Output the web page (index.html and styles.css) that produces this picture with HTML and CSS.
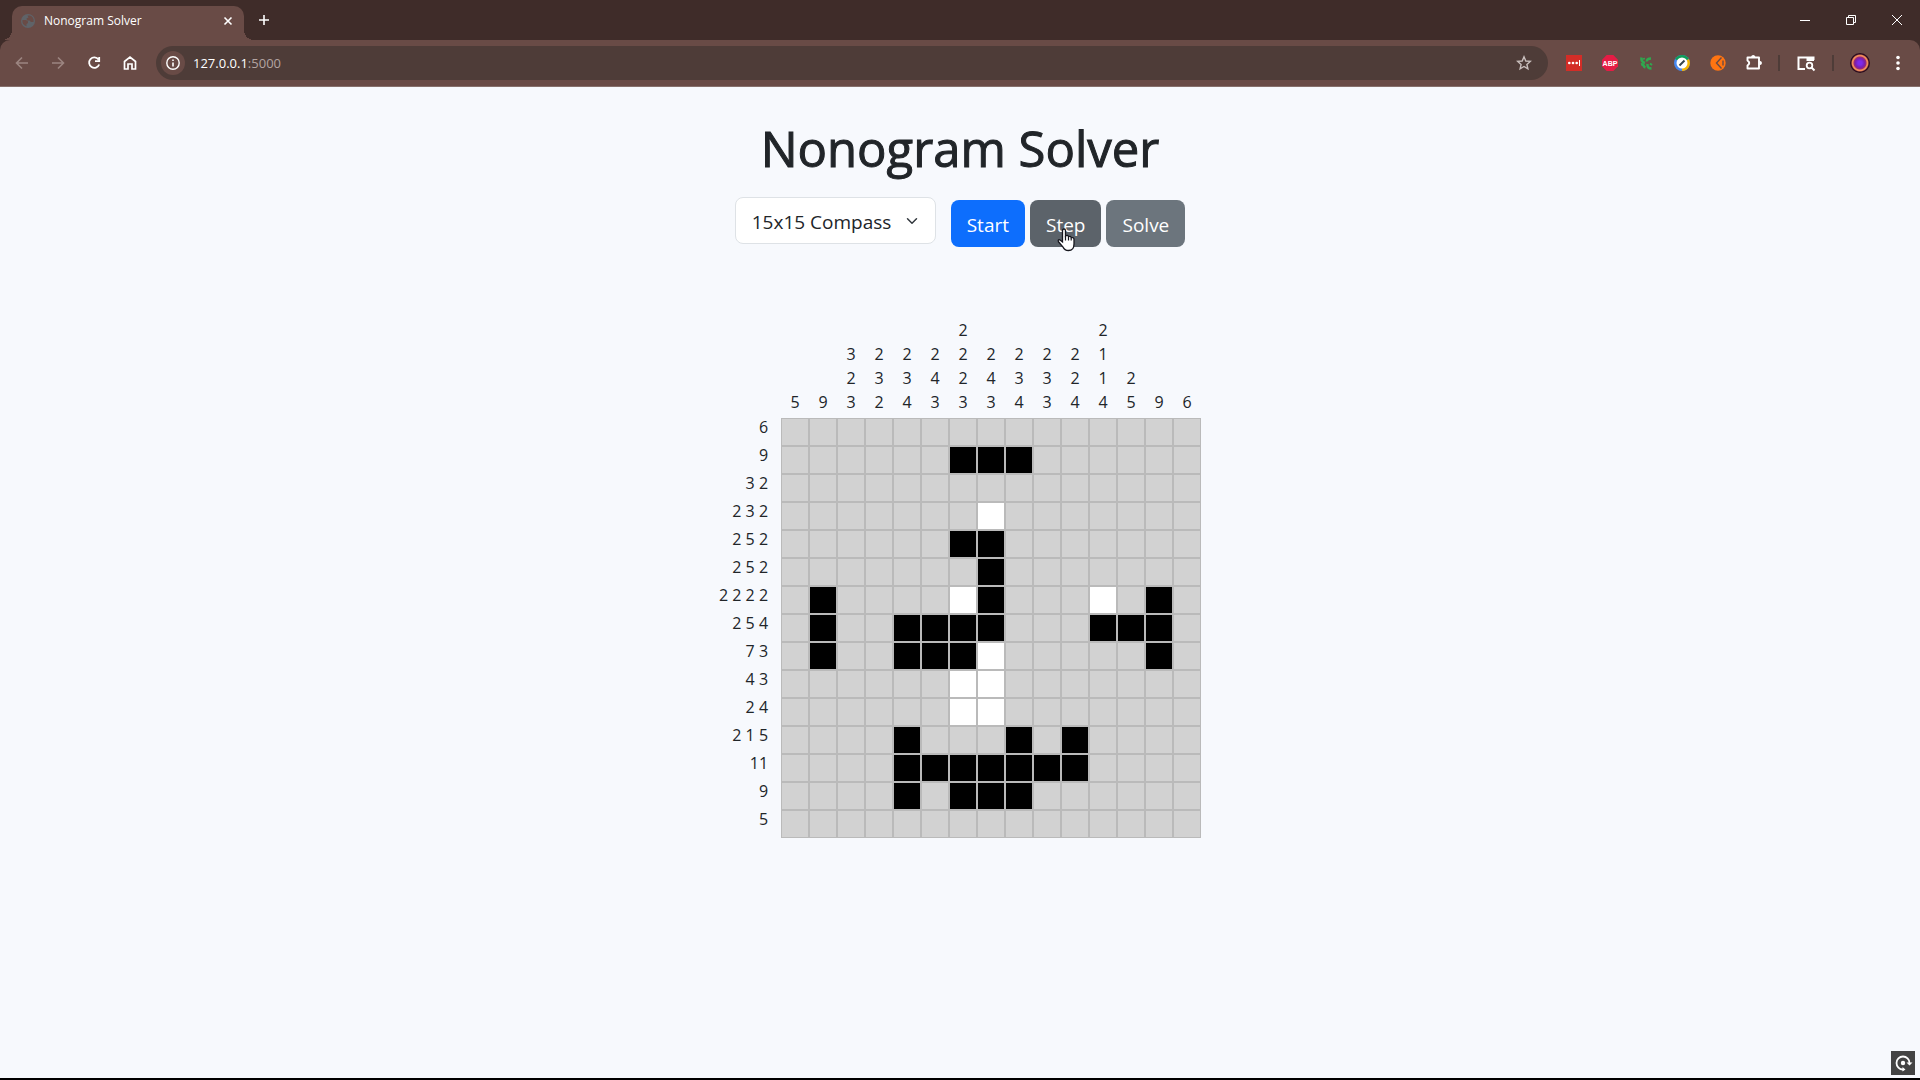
FILE: index.html
```html
<!DOCTYPE html>
<html lang="en">
<head>
<meta charset="utf-8">
<title>Nonogram Solver</title>
<link rel="stylesheet" href="styles.css">
</head>
<body>
<header class="browser">
  <div class="tab-strip">
    <div class="tab">
      <svg class="favicon" viewBox="0 0 16 16" aria-hidden="true"><circle cx="8" cy="8" r="7" fill="#5f6368"/><path d="M2.500 7H6L8 8.500V10L6.500 11V13.200A5.500 5.500 0 0 1 2.500 7zM7.500 2.500H10A5.800 5.800 0 0 1 13.500 9H11L9.500 7.500H7L6.500 5.500 8.500 4.500z" fill="#694b46"/></svg>
      <span class="tab-title">Nonogram Solver</span>
      <button class="icon-button tab-close" aria-label="Close tab"><svg viewBox="0 0 16 16"><path d="M4.500 4.500 11.500 11.500M11.500 4.500 4.500 11.500" stroke-width="1.600"/></svg></button>
    </div>
    <button class="icon-button new-tab" aria-label="New tab"><svg viewBox="0 0 16 16"><path d="M8 3V13M3 8H13" stroke-width="1.600"/></svg></button>
    <div class="window-controls">
      <button class="icon-button" aria-label="Minimize"><svg viewBox="0 0 16 16"><path d="M3 8.500H13"/></svg></button>
      <button class="icon-button" aria-label="Restore"><svg viewBox="0 0 16 16"><path d="M3.500 5.500H10.500V12.500H3.500zM5.500 5.500V3.500H12.500V10.500H10.500"/></svg></button>
      <button class="icon-button" aria-label="Close window"><svg viewBox="0 0 16 16"><path d="M3 3 13 13M13 3 3 13"/></svg></button>
    </div>
  </div>
  <div class="toolbar">
    <nav class="nav-buttons">
      <button class="icon-button" aria-label="Back" disabled><svg viewBox="0 0 16 16"><path d="M14 8H3M8 2.500 2.500 8 8 13.500" stroke-width="1.600"/></svg></button>
      <button class="icon-button" aria-label="Forward" disabled><svg viewBox="0 0 16 16"><path d="M2 8H13M8 2.500 13.500 8 8 13.500" stroke-width="1.600"/></svg></button>
      <button class="icon-button" aria-label="Reload"><svg viewBox="0 0 16 16"><path d="M12.500 4.500A5.200 5.200 0 1 0 13.200 9.500M13.200 2V6.200H9" stroke-width="1.800"/></svg></button>
      <button class="icon-button" aria-label="Home"><svg viewBox="0 0 16 16"><path d="M2.500 14V6.500L8 2 13.500 6.500V14H10V9H6V14z" stroke-width="1.700"/></svg></button>
    </nav>
    <div class="address-bar">
      <button class="icon-button site-info" aria-label="View site information"><svg viewBox="0 0 16 16"><circle cx="8" cy="8" r="6.200" stroke-width="1.400"/><path d="M8 7.500V11.500M8 4.500V6" stroke-width="1.600"/></svg></button>
      <span class="address"><span class="host">127.0.0.1</span>:5000</span>
      <button class="icon-button bookmark" aria-label="Bookmark this tab"><svg viewBox="0 0 16 16"><path d="M8 1.800 9.800 6 14.300 6.400 10.900 9.400 11.900 13.800 8 11.500 4.100 13.800 5.100 9.400 1.700 6.400 6.200 6z" stroke-width="1.400"/></svg></button>
    </div>
    <div class="extensions">
      <button class="icon-button" aria-label="Password manager"><svg viewBox="0 0 16 16"><path d="M0 0H16V16H0z" fill="#d32d27" stroke="none"/><path d="M13.500 5V11" stroke-width="1"/><g fill="#fff" stroke="none"><circle cx="3.300" cy="8" r="1.300"/><circle cx="7" cy="8" r="1.300"/><circle cx="10.700" cy="8" r="1.300"/></g></svg></button>
      <button class="icon-button" aria-label="Ad blocker"><svg viewBox="0 0 16 16"><path d="M4.700 0H11.300L16 4.700V11.300L11.300 16H4.700L0 11.300V4.700z" fill="#e51c45" stroke="none"/><text x="8" y="10.500" class="badge-text">ABP</text></svg></button>
      <button class="icon-button" aria-label="Phone extension"><svg viewBox="0 0 16 16"><g stroke="#2fa84f" stroke-width="2.600"><path d="M3.500 2.500Q3 7 7 8"/><path d="M9 6.500Q8.500 3.500 13 3.500"/><path d="M3 9.500Q5 9 5.500 10.500T7.500 12.500"/><path d="M9.500 9Q9 13.500 13.500 13.500"/><path d="M12 8.500 14 10" stroke-width="2"/><path d="M5 4 7 3.500" stroke-width="1.500"/></g></svg></button>
      <button class="icon-button" aria-label="Web tools"><svg viewBox="0 0 16 16"><circle cx="8" cy="8" r="8" fill="#4688f1" stroke="none"/><path d="M1.100 4A8 8 0 0 1 14.900 4L8 8z" fill="#109d58" stroke="none"/><path d="M14.900 4A8 8 0 0 1 8 16V8z" fill="#f4b400" stroke="none"/><circle cx="8" cy="8" r="5.500" fill="#fff" stroke="none"/><path d="M5.500 10.500 10.500 5.500" stroke="#34434b" stroke-width="2"/></svg></button>
      <button class="icon-button" aria-label="Orange extension"><svg viewBox="0 0 16 16"><circle cx="8" cy="8" r="7.700" fill="#ff7411" stroke="none"/><path d="M11.500 2.500 6.500 8 11.500 13.500M13 5.500V10.500" stroke="#694b46" stroke-width="1.400"/></svg></button>
      <button class="icon-button" aria-label="Extensions"><svg viewBox="0 0 16 16"><path d="M1.500 2.500H13V13.500H1.500V10.500Q5 8 1.500 5.500z" stroke-width="1.900" stroke-linejoin="round"/><path d="M5 2Q5.500 0 7.200 0T9.500 2zM13.500 5.700Q16 6.300 16 8T13.500 10.300z" fill="#fff" stroke="none"/></svg></button>
      <span class="divider"></span>
      <button class="icon-button side-search" aria-label="Search side panel"><svg viewBox="0 0 20 16"><path d="M9 14H2.500V2.500H17.500V5" stroke-width="2"/><path d="M10.500 2H18V6H10.500z" fill="#fff" stroke="none"/><circle cx="13.500" cy="10.500" r="2.800" stroke-width="1.800"/><path d="M15.500 12.500 18.500 15.500" stroke-width="2"/></svg></button>
      <span class="divider"></span>
      <button class="icon-button profile" aria-label="Profile"></button>
      <button class="icon-button" aria-label="Browser menu"><svg viewBox="0 0 16 16"><g fill="#fff" stroke="none"><circle cx="8" cy="2.500" r="1.800"/><circle cx="8" cy="8" r="1.800"/><circle cx="8" cy="13.500" r="1.800"/></g></svg></button>
    </div>
  </div>
</header>
<main class="page">
  <h1 class="title">Nonogram Solver</h1>
  <form class="controls" id="controls">
    <select class="puzzle-select" aria-label="Puzzle"><option>15x15 Compass</option></select>
    <div class="buttons">
      <button type="button" class="btn btn-primary">Start</button>
      <button type="button" class="btn btn-active">Step<svg class="cursor" viewBox="0 0 18 24" aria-hidden="true"><path d="M5.500 14V2.800Q5.500 1 7 1T8.500 2.800V8Q10.800 6.500 11.500 8.800 13.500 7.500 14.200 9.700 17 9 17 11.500V16Q17 22.500 11.500 22.500 7.500 22.500 6 19L1.500 13.800Q.500 11.500 2.800 11.800z" fill="#fff" stroke="#16161d" stroke-width="1.300"/><path d="M8.500 8V12.500M11.500 9V12.500M14.200 10V12.500" fill="none" stroke="#16161d" stroke-width="1.200"/></svg></button>
      <button type="button" class="btn btn-secondary">Solve</button>
    </div>
  </form>
  <table class="nonogram" id="nonogram"></table>
  <button class="capture" aria-label="Capture"><svg viewBox="0 0 24 24"><path d="M12 18.500A6.500 6.500 0 1 1 18.500 12" fill="none" stroke="#fff" stroke-width="1.800"/><circle cx="12" cy="12" r="2.200"/><path d="M15.500 11.500H21.500L18.500 14.500zM11.500 16 14.500 18.500 11.500 20.500z"/></svg></button>
</main>
<script src="script.js"></script>
</body>
</html>
```
FILE: styles.css
```css
* { box-sizing: border-box; }

body {
  margin: 0;
  min-height: 100vh;
  display: flex;
  flex-direction: column;
  background: #f7f9fd;
  color: #212529;
  font-family: "Segoe UI", "Open Sans", "Noto Sans", sans-serif;
  font-size: 16px;
  border-bottom: 2px solid #000;
}

button, select { font-family: inherit; }

/* Browser frame */
.browser {
  background: #3f2c29;
  color: #fff;
  border-bottom: 1px solid #86706c;
}

.icon-button {
  display: flex;
  flex: none;
  align-items: center;
  justify-content: center;
  width: 16px;
  height: 16px;
  padding: 0;
  border: 0;
  background: none;
  color: #fff;
}

.icon-button svg {
  display: block;
  width: 100%;
  height: 100%;
  overflow: visible;
  fill: none;
  stroke: currentColor;
}

.icon-button:disabled { color: #9c8581; }

.tab-strip {
  display: flex;
  align-items: center;
  height: 40px;
  padding: 0 15px 0 12px;
}

.tab {
  position: relative;
  align-self: flex-end;
  display: flex;
  align-items: center;
  gap: 8px;
  width: 232px;
  height: 34px;
  padding: 0 8px 4px;
  border-radius: 10px 10px 0 0;
  background: #694b46;
  font-size: 12px;
}

.tab::before, .tab::after {
  content: "";
  position: absolute;
  bottom: 0;
  width: 10px;
  height: 10px;
}

.tab::before {
  right: 100%;
  background: radial-gradient(circle at 0 0, transparent 10px, #694b46 10px);
}

.tab::after {
  left: 100%;
  background: radial-gradient(circle at 100% 0, transparent 10px, #694b46 10px);
}

.favicon { width: 16px; height: 16px; }
.tab-title { flex: 1; line-height: 16px; }
.new-tab { margin-left: 12px; }

.window-controls {
  display: flex;
  gap: 30px;
  margin-left: auto;
}

.toolbar {
  display: flex;
  align-items: center;
  gap: 18px;
  height: 46px;
  padding: 0 14px;
  border-radius: 10px 10px 0 0;
  background: #694b46;
}

.nav-buttons { display: flex; gap: 20px; }

.address-bar {
  flex: 1;
  display: flex;
  align-items: center;
  gap: 8px;
  height: 34px;
  padding: 0 16px 0 5px;
  border-radius: 17px;
  background: #4e3c38;
}

.site-info {
  width: 24px;
  height: 24px;
  padding: 4px;
  border-radius: 50%;
  background: #694b46;
}

.address { color: #b3a4a1; font-size: 13px; line-height: 20px; }
.host { color: #fff; }
.bookmark { margin-left: auto; color: #c9bfbd; }

.extensions { display: flex; align-items: center; gap: 20px; }
.badge-text { fill: #fff; stroke: none; font: 700 7px "Liberation Sans", sans-serif; text-anchor: middle; }
.divider { width: 2px; height: 16px; background: #4e3c38; margin: 0 -4px; }
.side-search { width: 20px; }

.profile {
  width: 20px;
  height: 20px;
  border-radius: 50%;
  background: radial-gradient(circle closest-side, #7e2bea 20%, #7a1fb0 45%, #9a2a78 60%, #f08a5c 70%, #f08a5c 78%, #2a0a1e 90%);
}

/* Page */
.page {
  position: relative;
  flex: 1;
  display: flex;
  flex-direction: column;
  align-items: center;
}

.title {
  margin: 30px 0 18px;
  font-size: 49px;
  font-weight: 500;
  line-height: 62px;
  -webkit-text-stroke: 1px currentColor;
}

.controls { display: flex; gap: 15px; }

.puzzle-select {
  appearance: none;
  width: 201px;
  height: 47px;
  padding: 2px 16px 0;
  border: 1px solid #dee2e6;
  border-radius: 8px;
  background: #fff url("data:image/svg+xml,%3Csvg xmlns='http://www.w3.org/2000/svg' viewBox='0 0 16 16'%3E%3Cpath fill='none' stroke='%23343a40' stroke-linecap='round' stroke-linejoin='round' stroke-width='2' d='m2 5 6 6 6-6'/%3E%3C/svg%3E") no-repeat right 17px center / 12px 12px;
  color: #212529;
  font-size: 19px;
}

.buttons { display: flex; gap: 5px; padding-top: 3px; }

.btn {
  position: relative;
  height: 47px;
  padding: 2px 16px 0;
  border: 0;
  border-radius: 8px;
  color: #fff;
  font-size: 19px;
}

.btn-primary { background: #0d6efd; }
.btn-secondary { background: #6c757d; }
.btn-active { background: #5c636a; }

.cursor {
  position: absolute;
  left: 27px;
  top: 28px;
  width: 18px;
  height: 24px;
}

.nonogram {
  margin-top: 71px;
  border-collapse: separate;
  border-spacing: 0;
}

.nonogram th { font-weight: 400; }

.nonogram .column-hint {
  padding: 0 0 4px;
  vertical-align: bottom;
  line-height: 24px;
}

.column-hint span { display: block; }

.nonogram .row-hint {
  padding: 0 13px 0 0;
  text-align: right;
  vertical-align: top;
  line-height: 18px;
  white-space: nowrap;
}

.cell {
  width: 28px;
  height: 28px;
  padding: 0;
  border: 1px solid #bababa;
  background: #d2d2d2;
}

.cell.filled { background: #000; }
.cell.empty { background: #fff; }

.capture {
  position: absolute;
  right: 5px;
  bottom: 3px;
  width: 24px;
  height: 24px;
  padding: 0;
  border: 0;
  background: #444;
}

.capture svg { display: block; fill: #fff; }
```
FILE: script.js
```javascript
const columnHints = ["5", "9", "3 2 3", "2 3 2", "2 3 4", "2 4 3", "2 2 2 3", "2 4 3", "2 3 4", "2 3 3", "2 2 4", "2 1 1 4", "2 5", "9", "6"];
const rowHints = ["6", "9", "3 2", "2 3 2", "2 5 2", "2 5 2", "2 2 2 2", "2 5 4", "7 3", "4 3", "2 4", "2 1 5", "11", "9", "5"];

// "#" is filled, "o" is known empty, "." is unknown
const board = [
  "...............",
  "......###......",
  "...............",
  ".......o.......",
  "......##.......",
  ".......#.......",
  ".#....o#...o.#.",
  ".#..####...###.",
  ".#..###o.....#.",
  "......oo.......",
  "......oo.......",
  "....#...#.#....",
  "....#######....",
  "....#.###......",
  "..............."
];
const states = { "#": "cell filled", "o": "cell empty", ".": "cell" };

const table = document.getElementById("nonogram");
const head = table.createTHead().insertRow();
head.insertCell();
columnHints.forEach(hint => {
  const th = document.createElement("th");
  th.scope = "col";
  th.className = "column-hint";
  th.innerHTML = hint.split(" ").map(n => `<span>${n}</span>`).join("");
  head.append(th);
});

const body = table.createTBody();
board.forEach((line, i) => {
  const row = body.insertRow();
  const th = document.createElement("th");
  th.scope = "row";
  th.className = "row-hint";
  th.textContent = rowHints[i];
  row.append(th);
  for (const mark of line) row.insertCell().className = states[mark];
});
```
